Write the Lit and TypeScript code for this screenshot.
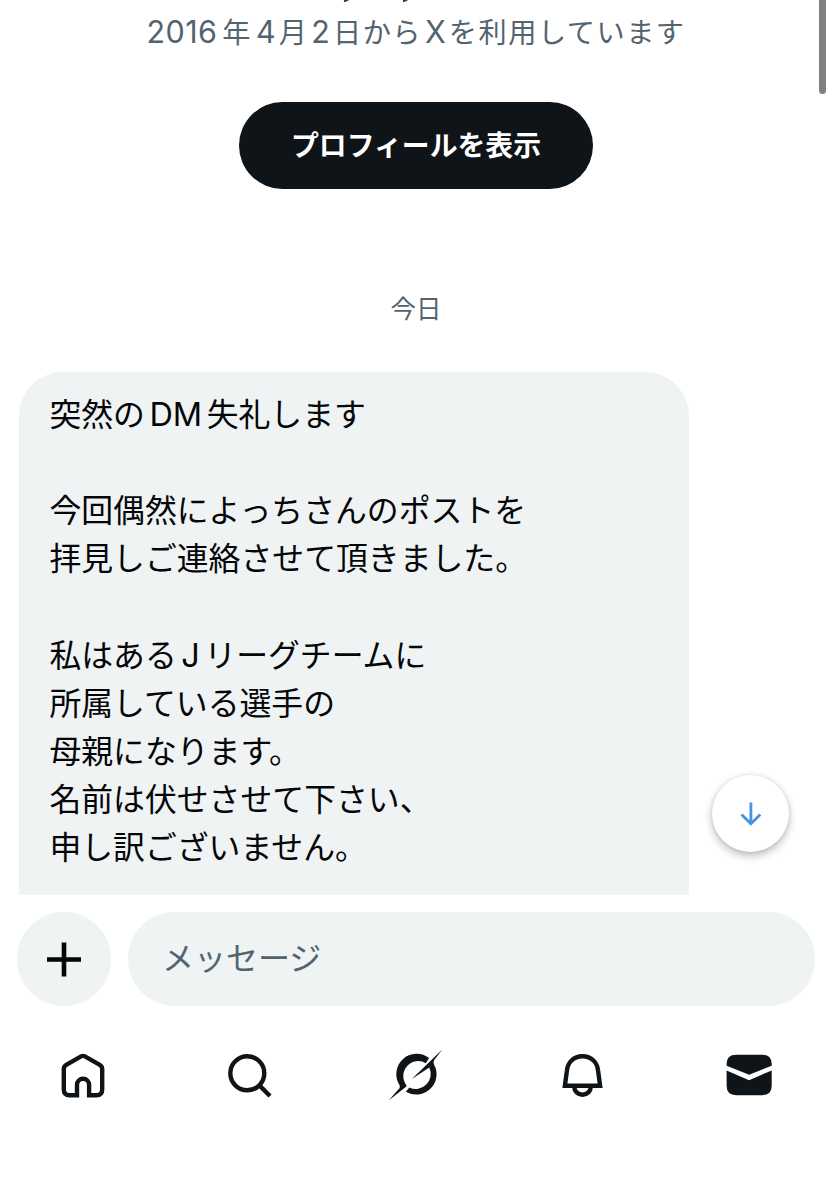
import { LitElement, html, css, svg } from "lit";
import { customElement } from "lit/decorators.js";

const MESSAGE = [
  "突然の|DM|失礼します",
  "",
  "今回偶然によっちさんのポストを",
  "拝見しご連絡させて頂きました。",
  "",
  "私はある|J|リーグチームに",
  "所属している選手の",
  "母親になります。",
  "名前は伏せさせて下さい、",
  "申し訳ございません。",
];

const ICONS = [
  svg`<path transform="translate(.8 .3)" d="M31.300 16.100q1.900-1.100 3.800 0L50 24.600q2.400 1.400 2.400 4.200v20.400q0 5.700-5.700 5.700H39.300V44.500a6.050 6.050 0 0 0-12.100 0v10.400h-7.500q-5.700 0-5.700-5.700V28.800q0-2.800 2.400-4.200z"/>`,
  svg`<g transform="translate(-1 -.7)"><circle cx="32.300" cy="34" r="17"/><path d="M44.600 46.300 55 56.700"/></g>`,
  svg`<g transform="translate(-1.200 0)" fill="currentColor" stroke="none"><path d="M48.300 18.100A20.300 20.300 0 0 0 18.800 45.200C19.600 47.500 18.400 48.800 16.300 50.800L8.200 60.200 25.800 46.200 25.300 44.700A14.900 14.900 0 0 1 45 23.200z"/><path d="M61.500 9.500 31 38.900 48.500 27.600A14.900 14.900 0 0 1 28.500 47.400L25.100 51.700A20.300 20.300 0 0 0 53.200 24.400C52.300 22 52.900 20.500 54.200 18.900z"/></g>`,
  svg`<path d="M34.500 16.300c-9.200 0-14.900 6.500-15.600 14.500L16.900 45.700h35.200l-2-14.900c-.7-8-6.400-14.500-15.600-14.500z"/><path d="M26.200 46.500a8.300 8.300 0 0 0 16.600 0"/>`,
  svg`<g fill="currentColor" stroke="none"><path d="M11.600 25.700V24q0-9.300 9.500-9.300h26.100q9.500 0 9.500 9.300v1.700l-22.500 9z"/><path d="M11.600 30.400 34.100 40.200 56.700 30.400V45.500q0 9.700-9.500 9.700H21.100q-9.500 0-9.500-9.700z"/></g>`,
];

@customElement("app-root")
export class AppRoot extends LitElement {
  static styles = css`
    :host {
      display: block;
      font-family: Inter, "Noto Sans CJK JP", sans-serif;
      color: #0f1419;
    }
    .screen {
      width: 832px;
      height: 1200px;
      background: #fff;
      position: relative;
      overflow: hidden;
      display: flex;
      flex-direction: column;
      white-space: nowrap;
      text-autospace: no-autospace;
    }
    .thread {
      height: 894.500px;
      overflow: hidden;
      display: flex;
      flex-direction: column;
      align-items: center;
      flex: none;
    }
    .counts {
      display: block;
      width: 100%;
      height: 4px;
      flex: none;
      stroke: #333b44;
      stroke-width: 2.500;
    }
    .joined {
      height: 54px;
      line-height: 54px;
      font-size: 28.200px;
      letter-spacing: 1.500px;
      color: #536471;
      font-family: "Noto Sans CJK JP", sans-serif;
      font-weight: 400;
    }
    .latin {
      font-family: Inter, sans-serif;
      font-size: 1.020em;
      line-height: 1;
      margin: 0 4.500px;
      letter-spacing: 0;
    }
    .joined .latin {
      font-size: 30.500px;
      margin: 0 4px;
    }
    .joined .latin:first-child {
      margin: 0 5px 0 0;
      letter-spacing: 0.400px;
    }
    .joined .digit {
      margin: 0 3px 0 4px;
    }
    .joined .tight {
      margin: 0 3px;
    }
    .profile {
      margin-top: 44px;
      width: 354px;
      height: 87px;
      flex: none;
      border: 0;
      border-radius: 44px;
      background: #0f1419;
      color: #fff;
      font: 700 27.850px "Noto Sans CJK JP", sans-serif;
      padding: 0 0 3px;
    }
    .day {
      margin-top: 98px;
      height: 40px;
      line-height: 40px;
      font-size: 25.500px;
      font-family: "Noto Sans CJK JP", sans-serif;
      color: #536471;
    }
    .bubble {
      align-self: flex-start;
      margin: 45px 0 0 19.400px;
      width: 669.500px;
      height: 560px;
      flex: none;
      box-sizing: border-box;
      padding: 16px 30px;
      background: #eff3f4;
      border-radius: 44px 44px 0 0;
      font: 400 31.850px/48.150px "Noto Sans CJK JP", sans-serif;
      color: #050607;
    }
    .line {
      height: 48.150px;
    }
    .composer {
      display: flex;
      gap: 17px;
      padding: 17.500px 17px 0;
      height: 94px;
      flex: none;
    }
    .add {
      width: 94px;
      height: 94px;
      border-radius: 50%;
      background: #eff3f4;
      flex: none;
    }
    .add svg {
      display: block;
      stroke: #050607;
      stroke-width: 4.600;
    }
    .field {
      flex: 1;
      border-radius: 47px;
      background: #eff3f4;
      padding-left: 34px;
      line-height: 88px;
      font-size: 32px;
      font-family: "Noto Sans CJK JP", sans-serif;
      color: #536471;
    }
    .tabs {
      display: grid;
      grid-template-columns: repeat(5, 1fr);
      justify-items: center;
      padding-top: 34px;
    }
    .tabs svg {
      width: 68px;
      height: 70px;
      fill: none;
      stroke: currentColor;
      stroke-width: 4.400;
    }
    .jump {
      position: absolute;
      left: 712px;
      top: 775px;
      width: 77px;
      height: 77px;
      border-radius: 50%;
      background: #fff;
      box-shadow: 0 4px 8px rgba(0, 0, 0, 0.25), 0 0 4px rgba(0, 0, 0, 0.1);
    }
    .jump svg {
      display: block;
      fill: none;
      stroke: #4595df;
      stroke-width: 2.800;
    }
    .scrollbar {
      position: absolute;
      left: 819px;
      top: -20px;
      width: 7px;
      height: 114px;
      border-radius: 4px;
      background: #808080;
    }
  `;

  private renderLine(line: string) {
    return html`<div class="line">${line
      .split("|")
      .map((run) => (/^[A-Z]/.test(run) ? html`<span class="latin">${run}</span>` : run))}</div>`;
  }

  render() {
    return html`<div class="screen">
      <main class="thread">
        <svg class="counts" viewBox="0 0 832 4"><path d="M349 -2Q348 0 344 1M408 -2Q407 0 403 1" fill="none"/></svg>
        <div class="joined"><span class="latin">2016</span>年<span class="latin digit">4</span>月<span class="latin tight">2</span>日から<span class="latin tight">X</span>を利用しています</div>
        <button class="profile">プロフィールを表示</button>
        <div class="day">今日</div>
        <div class="bubble">${MESSAGE.map((l) => this.renderLine(l))}</div>
      </main>
      <div class="composer">
        <div class="add"><svg width="94" height="94"><path d="M30 47.500H64M47 30.500V64.500"/></svg></div>
        <div class="field">メッセージ</div>
      </div>
      <nav class="tabs">${ICONS.map((icon) => html`<svg viewBox="0 0 68 70">${icon}</svg>`)}</nav>
      <div class="jump"><svg width="77" height="77"><path d="M38.900 27.500V48.500M29.500 39.500 38.900 48.800 48.300 39.500"/></svg></div>
      <div class="scrollbar"></div>
    </div>`;
  }
}
